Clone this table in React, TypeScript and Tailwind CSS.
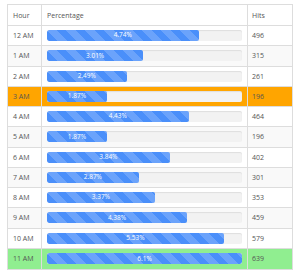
const rows = [
  { hour: '12 AM', pct: 4.74, hits: 496 },
  { hour: '1 AM', pct: 3.01, hits: 315 },
  { hour: '2 AM', pct: 2.49, hits: 261 },
  { hour: '3 AM', pct: 1.87, hits: 196, low: true },
  { hour: '4 AM', pct: 4.43, hits: 464 },
  { hour: '5 AM', pct: 1.87, hits: 196 },
  { hour: '6 AM', pct: 3.84, hits: 402 },
  { hour: '7 AM', pct: 2.87, hits: 301 },
  { hour: '8 AM', pct: 3.37, hits: 353 },
  { hour: '9 AM', pct: 4.38, hits: 459 },
  { hour: '10 AM', pct: 5.53, hits: 579 },
  { hour: '11 AM', pct: 6.1, hits: 639, high: true },
];

const maxPct = Math.max(...rows.map((r) => r.pct));

// first lowest hour is orange, peak hour is green, the rest are striped
const rowBg = (r: (typeof rows)[number], i: number) => {
  if (r.low) return 'bg-[#ffa500]';
  if (r.high) return 'bg-[#90ee90]';
  return i % 2 === 1 ? 'bg-[#f9f9f9]' : 'bg-white';
};

export default function App() {
  return (
    <div className="w-[300px] h-[275px] bg-white pt-[4px] pl-[7px] font-['Open_Sans',sans-serif] text-[#555]">
      <div className="w-[286px] border border-[#ddd]">
        <div className="grid grid-cols-[34px_206px_1fr] h-[21px] border-b border-[#ddd] text-[7px] leading-none">
          <div className="flex items-center pl-[5px] border-r border-[#ddd]">Hour</div>
          <div className="flex items-center pl-[5px] border-r border-[#ddd]">Percentage</div>
          <div className="flex items-center pl-[4px]">Hits</div>
        </div>
        {rows.map((r, i) => (
          <div
            key={r.hour}
            className={`grid grid-cols-[34px_206px_1fr] h-[20.25px] border-b border-[#ddd] last:border-b-0 text-[7px] leading-none ${rowBg(r, i)}`}
          >
            <div className="flex items-center pl-[5px] border-r border-[#ddd]">{r.hour}</div>
            <div className="flex items-center px-[5px] border-r border-[#ddd]">
              <div className="w-full h-[11px] rounded-[2px] bg-[#f2f2f2] shadow-[inset_0_1px_1px_rgba(0,0,0,0.08)] overflow-hidden">
                <div
                  className="h-full rounded-[2px] bg-[#4a8ffa] bg-[linear-gradient(45deg,rgba(255,255,255,0.18)_25%,transparent_25%,transparent_50%,rgba(255,255,255,0.18)_50%,rgba(255,255,255,0.18)_75%,transparent_75%,transparent)] bg-[length:19px_19px] flex items-center justify-center text-white text-[6.5px]"
                  style={{ width: `${(r.pct / maxPct) * 100}%` }}
                >
                  {r.pct}%
                </div>
              </div>
            </div>
            <div className="flex items-center pl-[4px]">{r.hits}</div>
          </div>
        ))}
      </div>
    </div>
  );
}
